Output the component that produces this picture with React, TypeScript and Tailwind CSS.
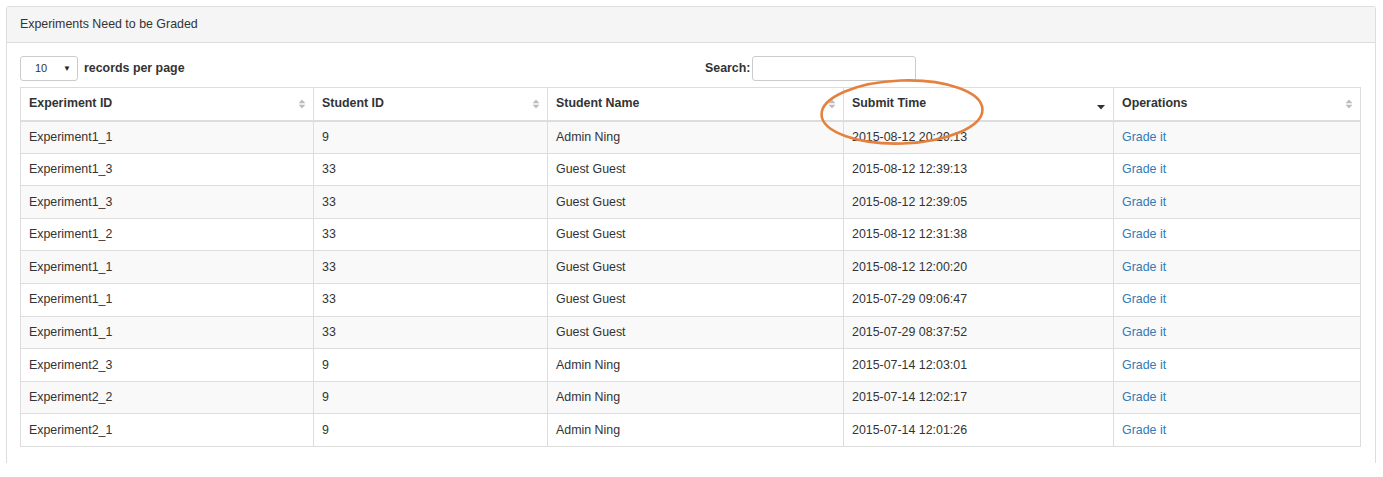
import React from 'react';

type Row = { exp: string; sid: string; name: string; time: string };

const ROWS: Row[] = [
  { exp: 'Experiment1_1', sid: '9', name: 'Admin Ning', time: '2015-08-12 20:29:13' },
  { exp: 'Experiment1_3', sid: '33', name: 'Guest Guest', time: '2015-08-12 12:39:13' },
  { exp: 'Experiment1_3', sid: '33', name: 'Guest Guest', time: '2015-08-12 12:39:05' },
  { exp: 'Experiment1_2', sid: '33', name: 'Guest Guest', time: '2015-08-12 12:31:38' },
  { exp: 'Experiment1_1', sid: '33', name: 'Guest Guest', time: '2015-08-12 12:00:20' },
  { exp: 'Experiment1_1', sid: '33', name: 'Guest Guest', time: '2015-07-29 09:06:47' },
  { exp: 'Experiment1_1', sid: '33', name: 'Guest Guest', time: '2015-07-29 08:37:52' },
  { exp: 'Experiment2_3', sid: '9', name: 'Admin Ning', time: '2015-07-14 12:03:01' },
  { exp: 'Experiment2_2', sid: '9', name: 'Admin Ning', time: '2015-07-14 12:02:17' },
  { exp: 'Experiment2_1', sid: '9', name: 'Admin Ning', time: '2015-07-14 12:01:26' },
];

function SortBoth() {
  return (
    <svg width="8" height="10" viewBox="0 0 8 10" className="absolute right-[7px] top-[11px]">
      <path d="M4 0.5 L7.5 4.3 L0.5 4.3 Z" fill="#bcbcbc" />
      <path d="M4 9.5 L7.5 5.7 L0.5 5.7 Z" fill="#bcbcbc" />
    </svg>
  );
}

function SortDesc() {
  return (
    <svg width="8" height="5" viewBox="0 0 8 5" className="absolute right-[8px] top-[17px]">
      <path d="M0 0 L8 0 L4 4.5 Z" fill="#333" />
    </svg>
  );
}

function Th({ label, desc, children }: { label: string; desc?: boolean; children?: React.ReactNode }) {
  return (
    <th className="relative h-[33px] border-l border-t border-b-2 border-[#ddd] px-[8px] text-left align-middle font-bold">
      {label}
      {desc ? <SortDesc /> : <SortBoth />}
      {children}
    </th>
  );
}

export default function App() {
  return (
    <div
      className="w-[1383px] h-[477px] bg-white p-[6px] pr-[7px] text-[#333] text-[12.4px]"
      style={{ fontFamily: '"Liberation Sans", Arial, sans-serif' }}
    >
      <div className="border border-b-0 border-[#ddd] rounded-t-[3px] h-[457px]">
        <div className="h-[36px] bg-[#f5f5f5] border-b border-[#ddd] px-[13px] flex items-center">
          Experiments Need to be Graded
        </div>
        <div className="px-[13px] pt-[13px]">
          <div className="flex items-center h-[25px] mb-[6px]">
            <div className="w-[685px] flex items-center">
              <div className="w-[58px] h-[25px] border border-[#ccc] rounded-[3px] flex items-center pl-[14px] pr-[6px] text-[11px]">
                <span>10</span>
                <span className="ml-auto text-[8px] text-[#222]">▼</span>
              </div>
              <span className="ml-[6px] font-bold">records per page</span>
            </div>
            <span className="font-bold">Search:</span>
            <div className="ml-[2px] w-[164px] h-[25px] border border-[#ccc] rounded-[3px]" />
          </div>
          <table className="table-fixed border-collapse w-[1340px] border-r border-[#ddd]">
            <colgroup>
              <col className="w-[293px]" />
              <col className="w-[234px]" />
              <col className="w-[296px]" />
              <col className="w-[270px]" />
              <col className="w-[247px]" />
            </colgroup>
            <thead>
              <tr>
                <Th label="Experiment ID" />
                <Th label="Student ID" />
                <Th label="Student Name" />
                <Th label="Submit Time" desc>
                  <svg
                    width="170"
                    height="72"
                    viewBox="0 0 170 72"
                    className="absolute left-[-27px] top-[-12px] pointer-events-none overflow-visible"
                  >
                    <ellipse
                      cx="85"
                      cy="36"
                      rx="80.5"
                      ry="31.5"
                      transform="rotate(-2 85 36)"
                      fill="none"
                      stroke="#e4813f"
                      strokeWidth="2.6"
                    />
                  </svg>
                </Th>
                <Th label="Operations" />
              </tr>
            </thead>
            <tbody>
              {ROWS.map((r, i) => (
                <tr key={i} className={i % 2 === 0 ? 'bg-[#f9f9f9]' : 'bg-white'}>
                  <td className="h-[32.6px] border-l border-b border-[#ddd] px-[8px]">{r.exp}</td>
                  <td className="border-l border-b border-[#ddd] px-[8px]">{r.sid}</td>
                  <td className="border-l border-b border-[#ddd] px-[8px]">{r.name}</td>
                  <td className="border-l border-b border-[#ddd] px-[8px]">{r.time}</td>
                  <td className="border-l border-b border-[#ddd] px-[8px]">
                    <a className="text-[#337ab7]">Grade it</a>
                  </td>
                </tr>
              ))}
            </tbody>
          </table>
        </div>
      </div>
    </div>
  );
}
